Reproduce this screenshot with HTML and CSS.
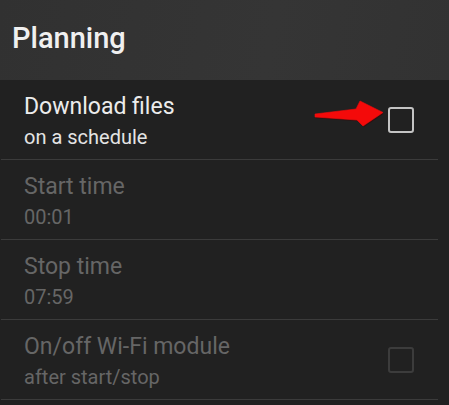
FILE: index.html
```html
<!DOCTYPE html>
<html>
<head>
<meta charset="utf-8">
<link rel="stylesheet" href="styles.css">
</head>
<body>
<div class="screen">
  <header class="toolbar"><h1 class="toolbar-title">Planning</h1></header>
  <ul class="prefs">
    <li class="pref">
      <div class="pref-text">
        <div class="pref-title">Download files</div>
        <div class="pref-summary">on a schedule</div>
      </div>
      <span class="checkbox"></span>
    </li>
    <li class="pref disabled">
      <div class="pref-text">
        <div class="pref-title">Start time</div>
        <div class="pref-summary">00:01</div>
      </div>
    </li>
    <li class="pref disabled">
      <div class="pref-text">
        <div class="pref-title">Stop time</div>
        <div class="pref-summary">07:59</div>
      </div>
    </li>
    <li class="pref disabled">
      <div class="pref-text">
        <div class="pref-title">On/off Wi-Fi module</div>
        <div class="pref-summary">after start/stop</div>
      </div>
      <span class="checkbox"></span>
    </li>
  </ul>
  <svg class="arrow" width="449" height="405" viewBox="0 0 449 405">
    <polygon points="315,114 356,109 360,101 383,112.5 363,126 357,120 315,117" fill="#3a0000" opacity="0.45" transform="translate(0.8,1.2)"/>
    <polygon points="315,114 356,109 360,101 383,112.5 363,126 357,120 315,117" fill="#f40a0a" stroke="#f40a0a" stroke-width="0.6" stroke-linejoin="round"/>
  </svg>
</div>
</body>
</html>
```

FILE: styles.css
```css
* { box-sizing: border-box; }
html, body { margin: 0; padding: 0; }
body {
  width: 449px;
  height: 405px;
  overflow: hidden;
  background: #212121;
  font-family: Roboto, "Noto Sans", sans-serif;
}
.screen { position: relative; width: 449px; height: 405px; }
.toolbar {
  height: 80px;
  background: linear-gradient(100deg, #313131, #353535 60%, #323232);
  padding: 21px 0 0 12px;
}
.toolbar-title {
  margin: 0;
  font-size: 29px;
  line-height: 34px;
  font-weight: 500;
  color: #f0f0f0;
}
.prefs {
  list-style: none;
  margin: 0 11px 0 1px;
  padding: 0;
}
.pref {
  display: flex;
  align-items: center;
  height: 80px;
  border-bottom: 1px solid #3b3b3b;
  padding: 3px 24px 0 23px;
}
.pref-text { flex: 1; }
.pref-title {
  font-size: 23px;
  line-height: 28px;
  color: #ececec;
}
.pref-summary {
  margin-top: 4px;
  font-size: 20px;
  line-height: 24px;
  color: #e4e4e4;
}
.checkbox {
  width: 26px;
  height: 26px;
  margin-top: -3px;
  border: 2.5px solid #c4c4c4;
  border-radius: 3px;
}
.disabled .pref-title,
.disabled .pref-summary { color: #666666; }
.disabled .checkbox { border-color: #3c3c3c; }
.arrow { position: absolute; left: 0; top: 0; pointer-events: none; }
```
